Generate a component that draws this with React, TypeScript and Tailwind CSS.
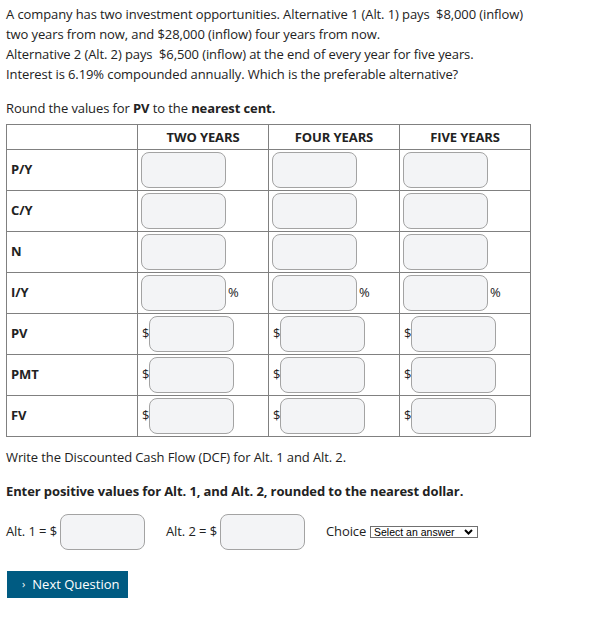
import React from "react";

const font = { fontFamily: '"Open Sans", "Noto Sans", sans-serif' };

type Kind = "plain" | "pct" | "usd";

const rows: { label: string; kind: Kind }[] = [
  { label: "P/Y", kind: "plain" },
  { label: "C/Y", kind: "plain" },
  { label: "N", kind: "plain" },
  { label: "I/Y", kind: "pct" },
  { label: "PV", kind: "usd" },
  { label: "PMT", kind: "usd" },
  { label: "FV", kind: "usd" },
];

function Box() {
  return (
    <input
      type="text"
      className="w-[85px] h-[36px] rounded-lg border border-[#a3a3a3] bg-[#f3f4f6] outline-none"
    />
  );
}

function Cell({ kind }: { kind: Kind }) {
  return (
    <td className="border border-[#808080] pl-[3px] align-middle">
      <div className="flex items-center">
        {kind === "usd" && <span className="w-[8px] pl-[1px] text-[13px]">$</span>}
        <Box />
        {kind === "pct" && <span className="ml-[2px] text-[13px]">%</span>}
      </div>
    </td>
  );
}

export default function App() {
  return (
    <div
      className="bg-white text-[#222] text-[13px] tracking-[-0.1px] px-[6px] pt-[4px] min-h-[621px]"
      style={font}
    >
      <p className="leading-[20px] whitespace-nowrap">
        A company has two investment opportunities. Alternative 1 (Alt. 1) pays&nbsp; $8,000 (inflow)
        <br />
        two years from now, and $28,000 (inflow) four years from now.
        <br />
        Alternative 2 (Alt. 2) pays&nbsp; $6,500 (inflow) at the end of every year for five years.
        <br />
        Interest is 6.19% compounded annually. Which is the preferable alternative?
      </p>
      <p className="mt-[14px] leading-[20px]">
        Round the values for <b>PV</b> to the <b>nearest cent.</b>
      </p>

      <table className="mt-[6px] table-fixed border-collapse w-[525px]">
        <colgroup>
          <col className="w-[131px]" />
          <col className="w-[131px]" />
          <col className="w-[131px]" />
          <col className="w-[131px]" />
        </colgroup>
        <thead>
          <tr className="h-[25px]">
            <th className="border border-[#808080]"></th>
            <th className="border border-[#808080] font-bold text-[13px] text-center pt-[2px]">TWO YEARS</th>
            <th className="border border-[#808080] font-bold text-[13px] text-center pt-[2px]">FOUR YEARS</th>
            <th className="border border-[#808080] font-bold text-[13px] text-center pt-[2px]">FIVE YEARS</th>
          </tr>
        </thead>
        <tbody>
          {rows.map((r) => (
            <tr key={r.label} className="h-[41px]">
              <td className="border border-[#808080] pl-[4px] font-bold align-middle">{r.label}</td>
              <Cell kind={r.kind} />
              <Cell kind={r.kind} />
              <Cell kind={r.kind} />
            </tr>
          ))}
        </tbody>
      </table>

      <p className="mt-[10px] leading-[20px]">Write the Discounted Cash Flow (DCF) for Alt. 1 and Alt. 2.</p>
      <p className="mt-[14px] leading-[20px] font-bold">
        Enter positive values for Alt. 1, and Alt. 2, rounded to the nearest dollar.
      </p>

      <div className="mt-[13px] flex items-center">
        <span className="w-[54px] whitespace-nowrap">Alt. 1 = $</span>
        <Box />
        <span className="ml-[21px] w-[54px] whitespace-nowrap">Alt. 2 = $</span>
        <Box />
        <span className="ml-[21px] w-[44px]">Choice</span>
        <div
          className="w-[108px] h-[12px] border border-[#707070] flex items-center justify-between pl-[3px] pr-[4px] text-[10.5px] leading-none tracking-normal text-black"
          style={{ fontFamily: '"Liberation Sans", Arial, sans-serif' }}
        >
          <span>Select an answer</span>
          <svg width="9" height="6" viewBox="0 0 9 6">
            <path d="M1 1l3.5 3.5L8 1" fill="none" stroke="#000" strokeWidth="2" />
          </svg>
        </div>
      </div>

      <button className="mt-[21px] ml-[1px] w-[121px] h-[27px] bg-[#005b82] text-white text-[13px] tracking-normal flex items-center pl-[15px]">
        <span className="text-[11px] mr-[7px]">›</span>
        Next Question
      </button>
    </div>
  );
}
